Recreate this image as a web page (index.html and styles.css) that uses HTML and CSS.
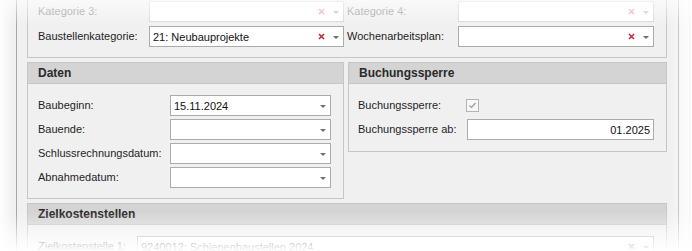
FILE: index.html
```html
<!DOCTYPE html>
<html lang="de">
<head>
<meta charset="utf-8">
<title>Baustelle</title>
<link rel="stylesheet" href="styles.css">
</head>
<body>
<div class="window">
  <div class="left-strip"></div>
  <div class="content">
    <div class="group group-top">
      <div class="grid2">
        <div class="row">
          <span class="lbl lbl-top disabled">Kategorie 3:</span>
          <div class="combo disabled"><span class="val"></span><span class="clr"><svg width="7" height="7" viewBox="0 0 7 7"><path d="M1 1L6 6M6 1L1 6"/></svg></span><span class="arr"></span></div>
        </div>
        <div class="row">
          <span class="lbl lbl-top disabled">Kategorie 4:</span>
          <div class="combo disabled"><span class="val"></span><span class="clr"><svg width="7" height="7" viewBox="0 0 7 7"><path d="M1 1L6 6M6 1L1 6"/></svg></span><span class="arr"></span></div>
        </div>
        <div class="row">
          <span class="lbl lbl-top">Baustellenkategorie:</span>
          <div class="combo"><span class="val">21: Neubauprojekte</span><span class="clr"><svg width="7" height="7" viewBox="0 0 7 7"><path d="M1 1L6 6M6 1L1 6"/></svg></span><span class="arr"></span></div>
        </div>
        <div class="row">
          <span class="lbl lbl-top">Wochenarbeitsplan:</span>
          <div class="combo"><span class="val"></span><span class="clr"><svg width="7" height="7" viewBox="0 0 7 7"><path d="M1 1L6 6M6 1L1 6"/></svg></span><span class="arr"></span></div>
        </div>
      </div>
    </div>

    <div class="pair">
      <section class="group group-daten">
        <header class="ghead">Daten</header>
        <div class="gbody body-daten">
          <div class="row"><span class="lbl lbl-daten">Baubeginn:</span><div class="combo"><span class="val">15.11.2024</span><span class="arr"></span></div></div>
          <div class="row"><span class="lbl lbl-daten">Bauende:</span><div class="combo"><span class="val"></span><span class="arr"></span></div></div>
          <div class="row"><span class="lbl lbl-daten">Schlussrechnungsdatum:</span><div class="combo"><span class="val"></span><span class="arr"></span></div></div>
          <div class="row"><span class="lbl lbl-daten">Abnahmedatum:</span><div class="combo"><span class="val"></span><span class="arr"></span></div></div>
        </div>
      </section>
      <section class="group group-buch">
        <header class="ghead">Buchungssperre</header>
        <div class="gbody body-buch">
          <div class="row"><span class="lbl lbl-buch">Buchungssperre:</span><span class="check"><svg width="11" height="11" viewBox="0 0 11 11"><path d="M2.5 5.5L4.5 7.5L8.5 3"/></svg></span></div>
          <div class="row"><span class="lbl lbl-buch">Buchungssperre ab:</span><div class="combo"><span class="val val-right">01.2025</span></div></div>
        </div>
      </section>
    </div>

    <section class="group group-ziel">
      <header class="ghead">Zielkostenstellen</header>
      <div class="gbody body-ziel">
        <div class="row"><span class="lbl lbl-ziel">Zielkostenstelle 1:</span><div class="combo"><span class="val">9240012: Schienenbaustellen 2024</span><span class="clr"><svg width="7" height="7" viewBox="0 0 7 7"><path d="M1 1L6 6M6 1L1 6"/></svg></span><span class="arr"></span></div></div>
      </div>
    </section>
  </div>
  <div class="scroll"></div>
  <div class="vignette"></div>
</div>
</body>
</html>
```

FILE: styles.css
```css
* { box-sizing: border-box; }
html, body { margin: 0; padding: 0; }
body {
  width: 692px;
  height: 251px;
  overflow: hidden;
  background: #f0f0f0;
  font-family: "Liberation Sans", Arial, sans-serif;
  font-size: 11px;
  color: #1e1e1e;
}
.window {
  position: relative;
  display: flex;
  height: 251px;
  overflow: hidden;
}
.left-strip {
  width: 16px;
  flex: none;
  background: #f0f0f0;
}
.content {
  width: 663px;
  flex: none;
  border-left: 1px solid #a6a6a6;
  border-right: 1px solid #a6a6a6;
  padding: 0 11px 0 10px;
}
.scroll {
  width: 11px;
  flex: none;
  background: #f4f4f4;
  border-right: 1px solid #c9c9c9;
}
.group {
  border: 1px solid #c6c6c6;
  background: #f0f0f0;
  margin-top: 4px;
}
.group-top {
  margin-top: 0;
  border-top: none;
  padding: 1px 12px 10px 10px;
}
.grid2 {
  display: grid;
  grid-template-columns: 306px 307px;
  column-gap: 3px;
  row-gap: 4px;
}
.row {
  display: flex;
  align-items: center;
  height: 21px;
}
.lbl {
  flex: none;
  white-space: nowrap;
  line-height: 21px;
}
.lbl.disabled { color: #9a9a9a; }
.lbl-top { width: 111px; }
.lbl-daten { width: 132px; }
.lbl-buch { width: 109px; }
.lbl-ziel { width: 99px; }
.combo {
  flex: 1;
  display: flex;
  align-items: center;
  height: 21px;
  background: #fff;
  border: 1px solid #ababab;
  padding-left: 3px;
}
.combo.disabled { border-color: #d6d6d6; }
.val {
  flex: 1;
  white-space: nowrap;
  overflow: hidden;
  color: #111;
}
.val-right { text-align: right; padding-right: 3px; }
.clr {
  width: 13px;
  height: 19px;
  display: flex;
  align-items: center;
  justify-content: center;
}
.clr svg path { stroke: #c8283a; stroke-width: 1.6; fill: none; }
.disabled .clr svg path { stroke: #e6a9b1; }
.arr {
  width: 15px;
  height: 19px;
  position: relative;
  display: flex;
  align-items: center;
  justify-content: center;
}
.arr::after {
  content: "";
  border-left: 3.5px solid transparent;
  border-right: 3.5px solid transparent;
  border-top: 3.5px solid #6e6e6e;
  margin-top: 1px;
}
.disabled .arr::after { border-top-color: #c4c4c4; }
.pair {
  display: flex;
  align-items: flex-start;
  gap: 4px;
  margin-top: 4px;
}
.pair .group { margin-top: 0; }
.group-daten { width: 317px; }
.group-buch { width: 319px; }
.ghead {
  height: 21px;
  line-height: 20px;
  background: #d4d4d4;
  border-bottom: 1px solid #c6c6c6;
  padding-left: 10px;
  font-size: 12px;
  font-weight: bold;
  color: #2a2a2a;
}
.gbody {
  display: flex;
  flex-direction: column;
  gap: 3px;
}
.body-daten { padding: 11px 12px 10px 10px; }
.body-buch { padding: 11px 12px 11px 9px; }
.body-ziel { padding: 11px 12px 10px 10px; }
.check {
  width: 13px;
  height: 13px;
  margin-left: -1px;
  border: 1px solid #b3b3b3;
  background: #f7f7f7;
  display: flex;
  align-items: center;
  justify-content: center;
}
.check svg path { stroke: #9a9a9a; stroke-width: 1.2; fill: none; }
.vignette {
  position: absolute;
  inset: 0;
  pointer-events: none;
  background:
    linear-gradient(to bottom, rgba(255,255,255,0.65) 0px, rgba(255,255,255,0) 26px, rgba(255,255,255,0) 212px, rgba(255,255,255,0.97) 251px),
    linear-gradient(to right, rgba(255,255,255,0.9) 0px, rgba(255,255,255,0) 14px, rgba(255,255,255,0) 670px, rgba(255,255,255,0.9) 692px);
}
```
